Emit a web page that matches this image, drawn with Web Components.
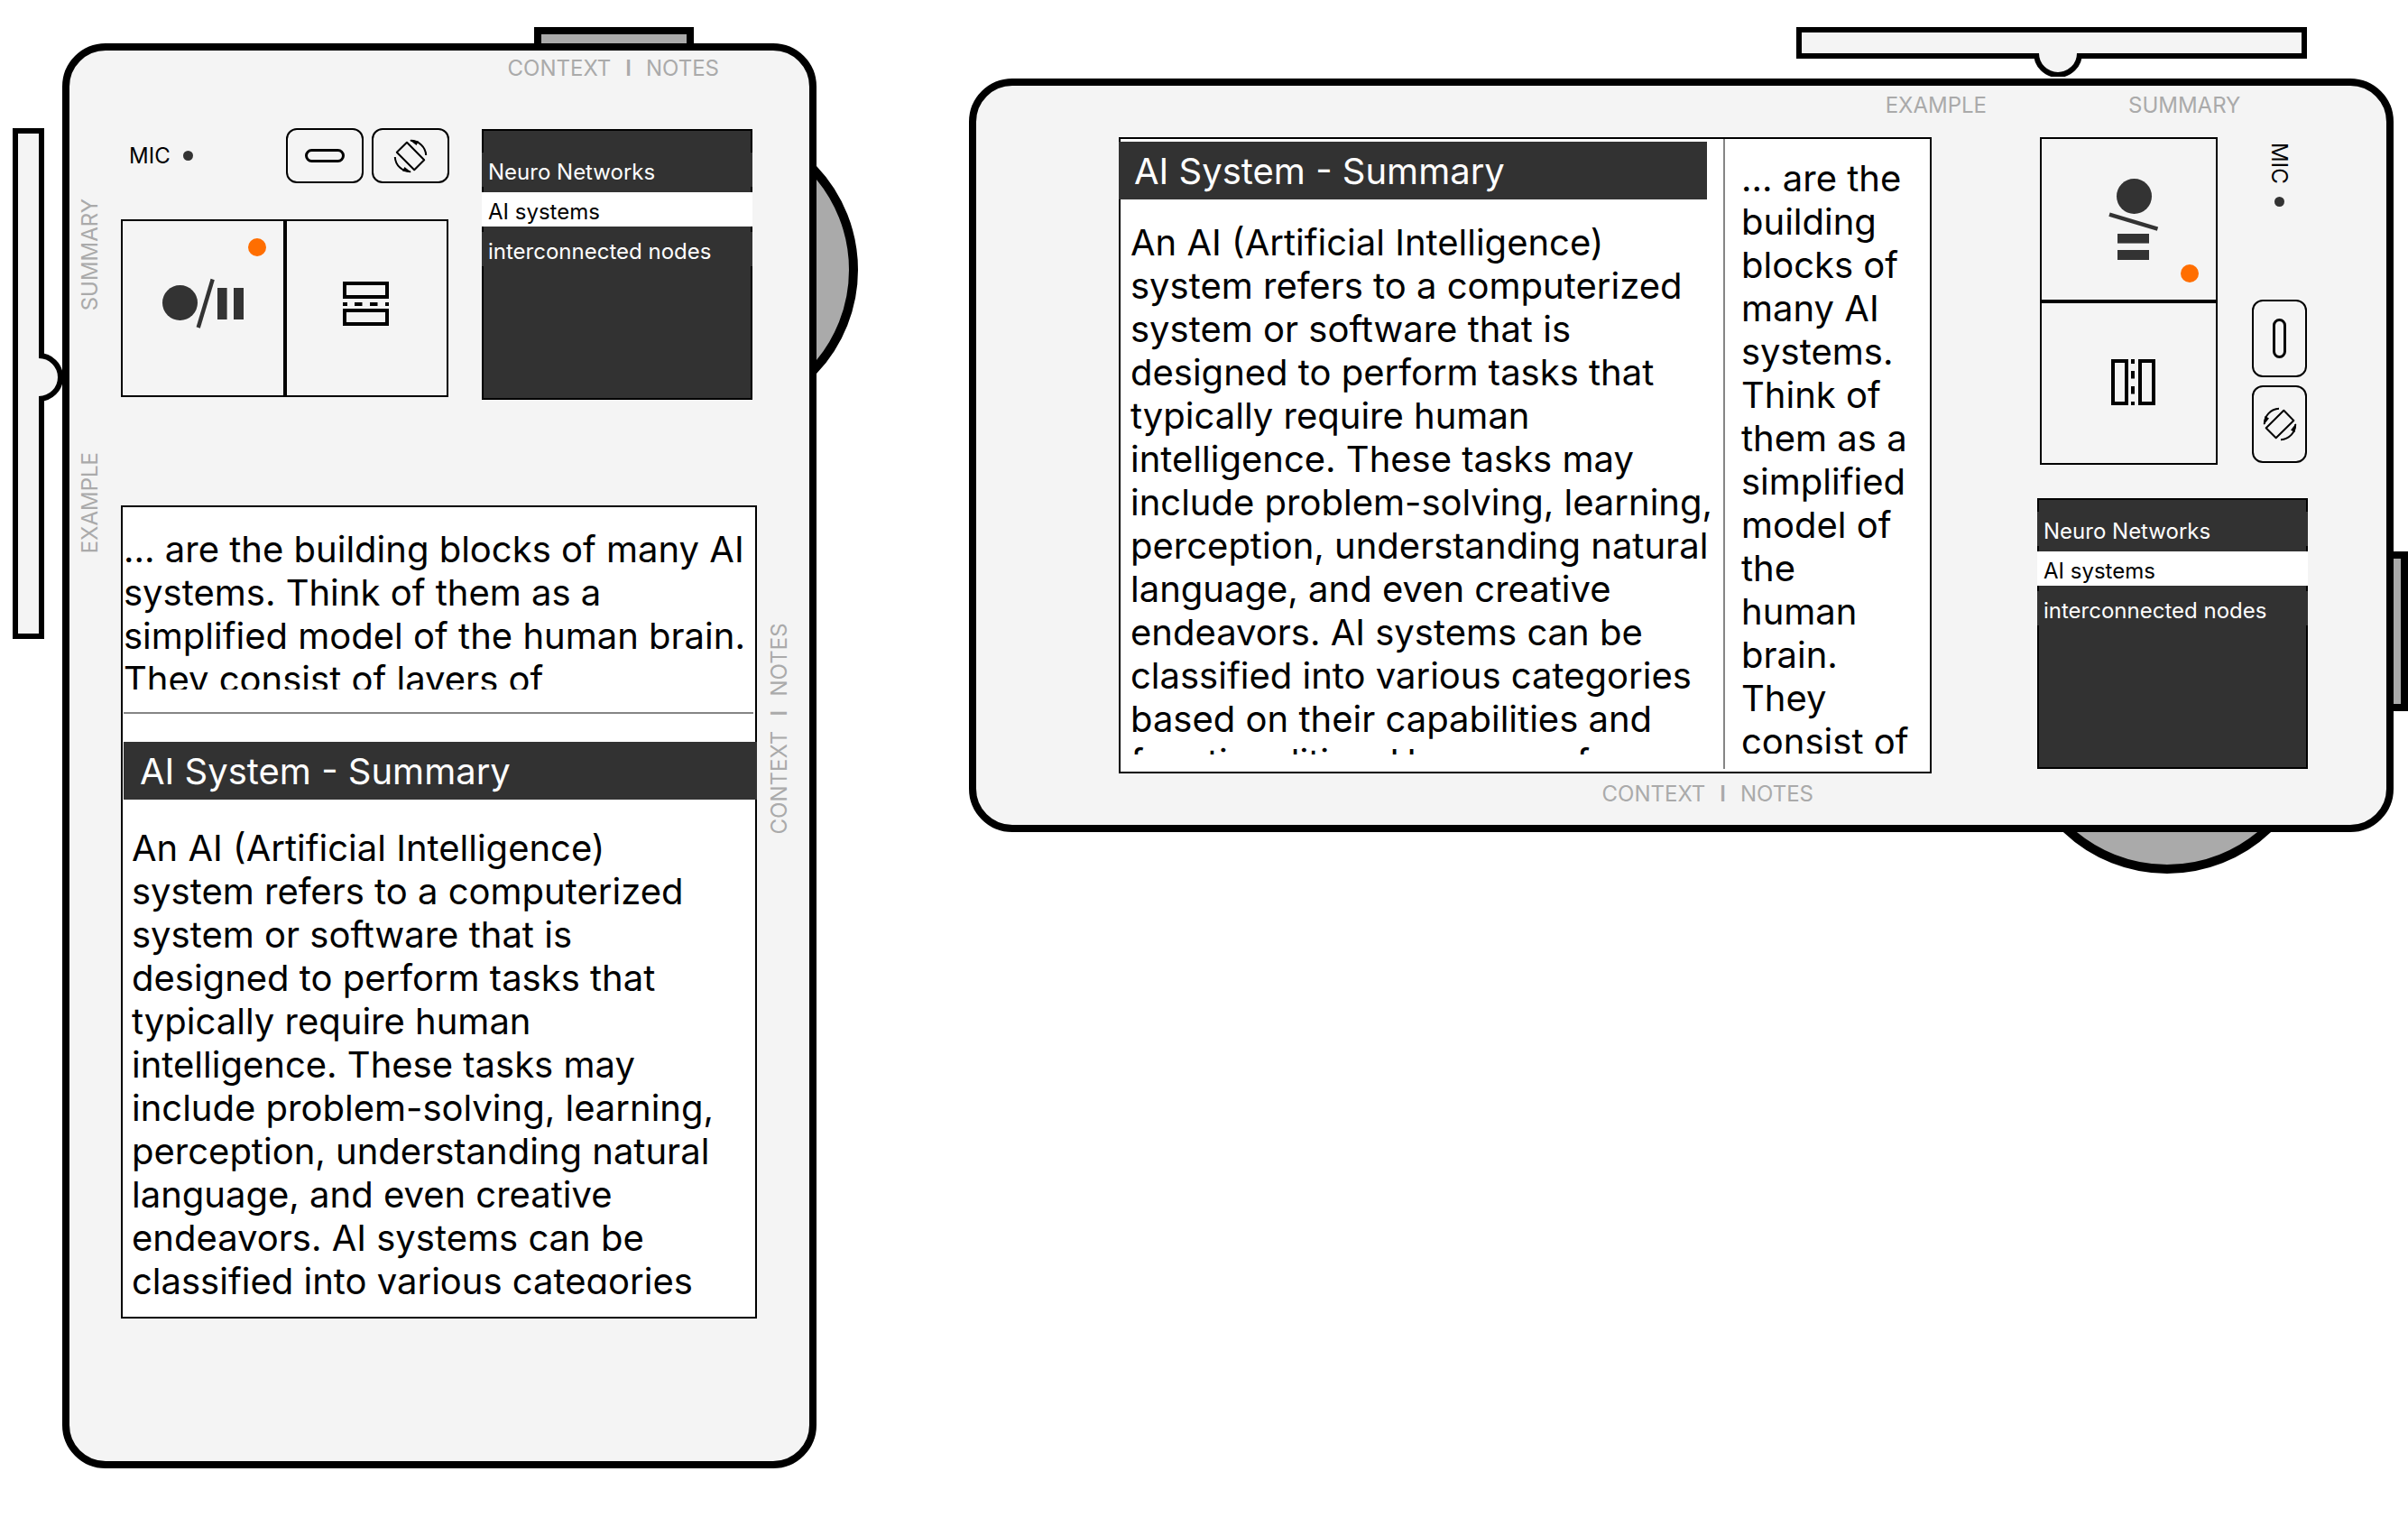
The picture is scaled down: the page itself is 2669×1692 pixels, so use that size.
<!DOCTYPE html>
<html lang="en">
<head>
<meta charset="utf-8">
<title>Neuro reader</title>
<style>
  body { margin: 0; background: #fff; color: #000; font-family: Inter, "Liberation Sans", sans-serif; }
</style>
</head>
<body>
<device-board>
  <device-portrait></device-portrait>
  <device-landscape></device-landscape>
</device-board>

<script>
const define = (name, html, setup) => {
  const template = document.createElement('template');
  template.innerHTML = html;
  customElements.define(name, class extends HTMLElement {
    constructor() {
      super();
      this.attachShadow({ mode: 'open' }).append(template.content.cloneNode(true));
    }
    connectedCallback() { if (setup) setup(this, this.shadowRoot); }
  });
};

/* The groups with class "art" are drawn upright and turned for the sideways device. */
const turnArt = (host, root) => {
  if (!host.hasAttribute('sideways')) return;
  root.querySelectorAll('svg').forEach(svg => {
    const { width: w, height: h } = svg.viewBox.baseVal;
    svg.setAttribute('viewBox', `0 0 ${h} ${w}`);
    svg.setAttribute('width', h);
    svg.setAttribute('height', w);
    svg.querySelector('.art').setAttribute('transform', `translate(${h} 0) rotate(90)`);
  });
};

define('side-slider', `
  <style>:host { display: block; line-height: 0; } svg { display: block; }</style>
  <svg width="55" height="566" viewBox="0 0 55 566" aria-hidden="true">
    <g class="art" fill="#f4f4f4" stroke="#000" stroke-width="6">
      <rect x="3" y="3" width="29" height="560"/>
      <path d="M29 252A24 24 0 0 1 29 300"/>
    </g>
  </svg>`, turnArt);

define('jog-wheel', `
  <style>:host { display: block; line-height: 0; } svg { display: block; }</style>
  <svg width="46" height="232" viewBox="0 0 46 232" aria-hidden="true">
    <g class="art"><circle cx="-121" cy="116" r="162" fill="#aaa" stroke="#000" stroke-width="10"/></g>
  </svg>`, turnArt);

define('edge-tab', `
  <style>
    :host { display: block; box-sizing: border-box; background: #aaa; border: 8px solid #000; width: 177px; height: 18px; border-bottom: 0; }
    :host([sideways]) { width: 16px; height: 177px; border-bottom: 8px solid #000; border-left: 0; }
  </style>`);

define('edge-label', `
  <style>
    :host { display: flex; gap: 16px; font-size: 24px; line-height: 29px; color: #aaa; white-space: nowrap; }
    :host([upward]) { writing-mode: vertical-rl; transform: rotate(180deg); }
    ::slotted(b) { font-weight: 600; }
  </style>
  <slot></slot>`);

define('mic-light', `
  <style>
    :host { display: flex; align-items: center; gap: 14px; font-size: 24px; line-height: 29px; }
    :host([sideways]) { writing-mode: vertical-rl; }
    i { width: 11px; height: 11px; border-radius: 50%; background: #333; }
  </style>
  <span>MIC</span><i></i>`);

define('tool-buttons', `
  <style>
    :host { display: flex; gap: 9px; }
    :host([sideways]) { flex-direction: column; }
    button { display: grid; place-items: center; box-sizing: border-box; width: 86px; height: 61px; margin: 0; padding: 0; background: none; border: 2px solid #000; border-radius: 12px; }
    :host([sideways]) button { width: 61px; height: 86px; }
    svg { display: block; }
  </style>
  <button aria-label="Dictate">
    <svg width="44" height="15" viewBox="0 0 44 15"><g class="art" fill="none" stroke="#000" stroke-width="3"><rect x="1.5" y="1.5" width="41" height="12" rx="6"/></g></svg>
  </button>
  <button aria-label="Rotate">
    <svg width="40" height="40" viewBox="0 0 40 40"><g class="art"><g transform="translate(20 20)" fill="none" stroke="#000" stroke-width="2">
      <path d="M-4-15.3L-15.2-4.3 4.2 15.3 15.2 4.3Z" stroke-linejoin="round"/>
      <path d="M0-17.2A17 17 0 0 1 17.2-1M0 17.2A17 17 0 0 1-17.2 1"/>
      <path d="M-1-18L6.500-12 9-16.600ZM1 18L-6.500 12-9 16.600Z" fill="#000" stroke="none"/>
    </g></g></svg>
  </button>`, turnArt);

define('record-panel', `
  <style>
    :host { display: flex; box-sizing: border-box; border: 2px solid #000; width: 363px; }
    :host([sideways]) { flex-direction: column; width: 197px; height: 363px; }
    button { display: block; box-sizing: border-box; margin: 0; padding: 0; background: none; border: 0; }
    button + button { border-left: 4px solid #000; }
    :host([sideways]) button + button { border-left: 0; border-top: 4px solid #000; }
    svg { display: block; }
  </style>
  <button aria-label="Record or pause">
    <svg width="178" height="193" viewBox="0 0 178 193"><g class="art">
      <g fill="#333"><circle cx="63.5" cy="90.5" r="19.5"/><rect x="105" y="74" width="10.6" height="35"/><rect x="123" y="74" width="11" height="35"/></g>
      <path d="M99.7 64.5L83.7 118" stroke="#333" stroke-width="4.4"/>
      <circle cx="149" cy="29" r="10" fill="#ff6e00"/>
    </g></svg>
  </button>
  <button aria-label="Split view">
    <svg width="177" height="193" viewBox="0 0 177 193"><g class="art" fill="none" stroke="#000" stroke-width="4">
      <rect x="64" y="69" width="47" height="15"/>
      <rect x="64" y="99" width="47" height="15"/>
      <path d="M62 92h5M75 92h8.500M92 92h8.500M109 92h4"/>
    </g></svg>
  </button>`, turnArt);

define('topic-list', `
  <style>
    :host { display: block; box-sizing: border-box; width: 300px; height: 300px; padding-top: 24px; background: #323232; border: 2px solid #000; }
    :host([sideways]) { padding-top: 13px; }
    ul { display: flex; flex-direction: column; gap: 6px; margin: 0 -2px; padding: 0; list-style: none; }
    button { display: block; box-sizing: border-box; width: 100%; margin: 0; padding: 7px 7px 2px; border: 0; background: #323232; color: #fff; font: inherit; font-size: 24px; line-height: 29px; text-align: left; }
    button[aria-current] { background: #fff; color: #000; }
  </style>
  <ul>
    <li><button>Neuro Networks</button></li>
    <li><button aria-current="true">AI systems</button></li>
    <li><button>interconnected nodes</button></li>
  </ul>`);

define('title-bar', `
  <style>
    :host { display: block; background: #323232; color: #fff; padding: 9px 18px 7px; }
    :host([sideways]) { padding-left: 17px; }
    h2 { margin: 0; font-size: 40px; line-height: 48px; font-weight: 400; }
  </style>
  <h2><slot></slot></h2>`);

define('reading-text', `
  <style>
    :host { display: block; overflow: hidden; font-size: 40px; line-height: 48px; }
    p { margin: 0; }
  </style>
  <p><slot></slot></p>`);

define('device-portrait', `
  <style>
    :host { display: grid; grid-template-columns: 55px 1fr 46px; align-items: start; }
    edge-tab { grid-column: 2; justify-self: end; margin-right: 136px; }
    side-slider { grid-area: 2 / 1; margin-top: 94px; }
    jog-wheel { grid-area: 2 / 3; margin-top: 135px; }
    .case { grid-area: 2 / 2; display: flex; flex-direction: column; border: 8px solid #000; border-radius: 48px; background: #f4f4f4; padding: 5px 0 158px; }
    .top { display: flex; justify-content: flex-end; padding-right: 100px; }
    .middle { display: grid; grid-template-columns: 57px 1fr 58px; }
    .left { display: flex; flex-direction: column; align-items: flex-start; gap: 157px; padding: 130px 0 0 8px; }
    .right { display: flex; align-items: flex-start; padding: 600px 0 0 10px; }
    .main { display: flex; flex-direction: column; gap: 117px; padding-top: 52px; }
    .controls { display: flex; gap: 37px; align-items: flex-end; }
    .keys { display: flex; flex-direction: column; gap: 40px; padding-bottom: 3px; }
    .row { display: flex; justify-content: space-between; align-items: center; padding-left: 9px; margin-right: -1px; }
    .screen { background: #fff; border: 2px solid #000; padding: 23px 0 25px 1px; }
    .example { height: 179px; }
    hr { margin: 25px 2px 31px 0; border: 0; height: 2px; background: #858585; }
    title-bar { margin-right: -2px; }
    .summary { height: 518px; margin: 30px 38px 0 9px; }
  </style>
  <edge-tab></edge-tab>
  <side-slider></side-slider>
  <section class="case">
    <div class="top"><edge-label><span>CONTEXT</span><b>I</b><span>NOTES</span></edge-label></div>
    <div class="middle">
      <div class="left"><edge-label upward>SUMMARY</edge-label><edge-label upward>EXAMPLE</edge-label></div>
      <div class="main">
        <div class="controls">
          <div class="keys">
            <div class="row"><mic-light></mic-light><tool-buttons></tool-buttons></div>
            <record-panel></record-panel>
          </div>
          <topic-list></topic-list>
        </div>
        <article class="screen">
          <reading-text class="example">... are the building blocks of many AI systems. Think of them as a simplified model of the human brain. They consist of layers of</reading-text>
          <hr>
          <title-bar>AI System - Summary</title-bar>
          <reading-text class="summary">An AI (Artificial Intelligence) system refers to a computerized system or software that is designed to perform tasks that typically require human intelligence. These tasks may include problem-solving, learning, perception, understanding natural language, and even creative endeavors. AI systems can be classified into various categories</reading-text>
        </article>
      </div>
      <div class="right"><edge-label upward><span>CONTEXT</span><b>I</b><span>NOTES</span></edge-label></div>
    </div>
  </section>
  <jog-wheel></jog-wheel>`);

define('device-landscape', `
  <style>
    :host { display: grid; grid-template-columns: 1fr 16px; align-items: start; }
    side-slider { justify-self: end; margin: 0 96px 2px 0; }
    .case { grid-area: 2 / 1; display: flex; gap: 117px; border: 8px solid #000; border-radius: 48px; background: #f4f4f4; padding: 7px 87px 20px 158px; }
    edge-tab { grid-area: 2 / 2; margin-top: 524px; }
    jog-wheel { grid-area: 3 / 1; justify-self: end; margin-right: 135px; }
    .reader { flex: 1; display: flex; flex-direction: column; }
    .top, .bottom { display: flex; }
    .reader .top { justify-content: flex-end; margin-right: -61px; }
    .reader .bottom { justify-content: flex-end; padding: 8px 131px 0 0; }
    .side .top { padding-left: 101px; }
    .screen { display: flex; margin-top: 21px; background: #fff; border: 2px solid #000; }
    .main { flex: 1; display: flex; flex-direction: column; padding: 3px 0 19px; }
    title-bar { margin: 0 18px 0 -2px; }
    .summary { height: 591px; margin: 24px 9px 0 11px; }
    .rule { width: 2px; margin: 0 0 3px; background: #858585; }
    .aside { width: 227px; box-sizing: border-box; padding: 20px 13px 0 18px; }
    .example { height: 661px; }
    .side { width: 300px; }
    .controls { display: flex; justify-content: space-between; margin: 21px 1px 37px 3px; }
    .keys { display: flex; flex-direction: column; justify-content: space-between; align-items: center; padding: 6px 0 2px; }
  </style>
  <side-slider sideways></side-slider>
  <section class="case">
    <div class="reader">
      <div class="top"><edge-label>EXAMPLE</edge-label></div>
      <article class="screen">
        <div class="main">
          <title-bar sideways>AI System - Summary</title-bar>
          <reading-text class="summary">An AI (Artificial Intelligence) system refers to a computerized system or software that is designed to perform tasks that typically require human intelligence. These tasks may include problem-solving, learning, perception, understanding natural language, and even creative endeavors. AI systems can be classified into various categories based on their capabilities and functionalities. Here are a few</reading-text>
        </div>
        <div class="rule"></div>
        <div class="aside">
          <reading-text class="example">... are the building blocks of many AI systems. Think of them as a simplified model of the human brain. They consist of</reading-text>
        </div>
      </article>
      <div class="bottom"><edge-label><span>CONTEXT</span><b>I</b><span>NOTES</span></edge-label></div>
    </div>
    <div class="side">
      <div class="top"><edge-label>SUMMARY</edge-label></div>
      <div class="controls">
        <record-panel sideways></record-panel>
        <div class="keys"><mic-light sideways></mic-light><tool-buttons sideways></tool-buttons></div>
      </div>
      <topic-list sideways></topic-list>
    </div>
  </section>
  <edge-tab sideways></edge-tab>
  <jog-wheel sideways></jog-wheel>`);

define('device-board', `
  <style>
    :host { display: grid; grid-template-columns: 937fr 1595fr; gap: 123px; align-items: start; padding: 30px 0 65px 14px; }
  </style>
  <slot></slot>`);
</script>
</body>
</html>
